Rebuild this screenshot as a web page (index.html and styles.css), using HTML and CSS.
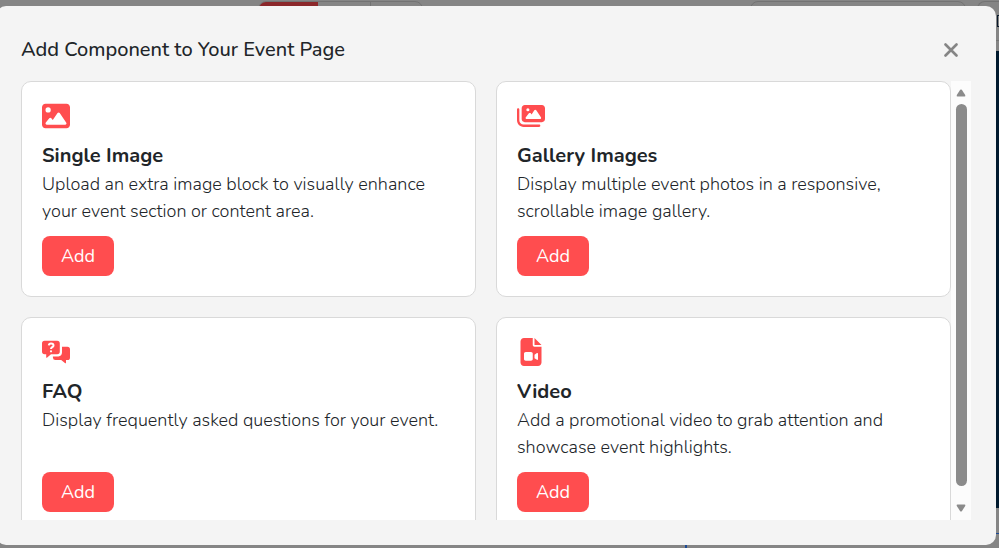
FILE: index.html
```html
<!DOCTYPE html>
<html lang="en">
<head>
<meta charset="utf-8">
<meta name="viewport" content="width=device-width, initial-scale=1">
<title>Add Component to Your Event Page</title>
<link rel="stylesheet" href="styles.css">
</head>
<body>
<div class="page" aria-hidden="true">
  <div class="toolbar">
    <div class="tabs"><span class="tab tab-active"></span><span class="tab"></span><span class="tab"></span></div>
    <div class="field"></div>
    <div class="field field-end"><span class="field-mark"></span></div>
  </div>
  <div class="hero"></div>
  <div class="panel"></div>
  <div class="footer-row"><span class="footer-mark"></span></div>
</div>

<div class="overlay">
  <section class="modal" role="dialog" aria-modal="true" aria-labelledby="modal-title">
    <header class="modal-header">
      <h1 class="modal-title" id="modal-title">Add Component to Your Event Page</h1>
      <button class="close" type="button" aria-label="Close">
        <svg viewBox="0 0 14 14" width="14" height="14"><path d="M1.5 1.5L12.5 12.5M12.5 1.5L1.5 12.5" fill="none" stroke="currentColor" stroke-width="2.6" stroke-linecap="round"/></svg>
      </button>
    </header>
    <div class="modal-body">
      <div class="cards">
        <article class="card">
          <svg class="icon" viewBox="0 0 512 512"><path d="M0 96C0 60.7 28.7 32 64 32H448c35.3 0 64 28.7 64 64V416c0 35.3-28.7 64-64 64H64c-35.3 0-64-28.7-64-64V96zM323.8 202.5c-4.5-6.6-11.9-10.5-19.8-10.5s-15.4 3.9-19.8 10.5l-87 127.6L170.7 297c-4.6-5.7-11.5-9-18.7-9s-14.2 3.3-18.7 9l-64 80c-5.8 7.2-6.9 17.1-2.9 25.4s12.4 13.6 21.6 13.6h96 32H424c8.9 0 17.1-4.9 21.2-12.8s3.6-17.4-1.4-24.7l-120-176zM112 192a48 48 0 1 0 0-96 48 48 0 1 0 0 96z"/></svg>
          <h2 class="card-title">Single Image</h2>
          <p class="card-text">Upload an extra image block to visually enhance your event section or content area.</p>
          <button class="add" type="button">Add</button>
        </article>
        <article class="card">
          <svg class="icon" viewBox="0 0 576 512"><path d="M160 32c-35.3 0-64 28.7-64 64V320c0 35.3 28.7 64 64 64H512c35.3 0 64-28.7 64-64V96c0-35.3-28.7-64-64-64H160zM396 138.7l96 144c4.9 7.4 5.4 16.8 1.2 24.6S480.9 320 472 320H328 280 200c-9.2 0-17.6-5.3-21.6-13.6s-2.9-18.2 2.9-25.4l64-80c4.6-5.7 11.4-9 18.7-9s14.2 3.3 18.7 9l17.3 21.6 56-84C360.5 132 368 128 376 128s15.5 4 20 10.7zM192 128a32 32 0 1 1 64 0 32 32 0 1 1 -64 0zM48 120c0-13.3-10.7-24-24-24S0 106.7 0 120V344c0 75.1 60.9 136 136 136H456c13.3 0 24-10.7 24-24s-10.7-24-24-24H136c-48.6 0-88-39.4-88-88V120z"/></svg>
          <h2 class="card-title">Gallery Images</h2>
          <p class="card-text">Display multiple event photos in a responsive, scrollable image gallery.</p>
          <button class="add" type="button">Add</button>
        </article>
        <article class="card">
          <svg class="icon" viewBox="0 0 28 28"><path d="M2.6 2.8H15.2Q17.8 2.8 17.8 5.4V13.6Q17.8 16.2 15.2 16.2H9L5.2 19.6Q4.2 20.3 4.2 19V16.2H2.6Q0 16.2 0 13.6V5.4Q0 2.8 2.6 2.8Z"/><path d="M20 8.8H25.4Q28 8.8 28 11.4V19.4Q28 22 25.4 22H24V24.4Q24 25.8 22.9 25L19.2 22H13.4Q11 22 10.9 19.4V18.4H16.4Q19.9 18 20 14.6Z"/><path class="icon-line" d="M6.8 7.3C7 5.8 8 5.4 9 5.4C10.5 5.4 11.5 6.2 11.5 7.4C11.5 9.3 9 9.1 9 11"/><circle class="icon-dot" cx="9" cy="13.3" r="1.1"/></svg>
          <h2 class="card-title">FAQ</h2>
          <p class="card-text">Display frequently asked questions for your event.</p>
          <button class="add" type="button">Add</button>
        </article>
        <article class="card">
          <svg class="icon" viewBox="-64 0 512 512"><path d="M64 0C28.7 0 0 28.7 0 64V448c0 35.3 28.7 64 64 64H320c35.3 0 64-28.7 64-64V160H256c-17.7 0-32-14.3-32-32V0H64zM256 0V128H384L256 0zM64 288c0-17.7 14.3-32 32-32h96c17.7 0 32 14.3 32 32v96c0 17.7-14.3 32-32 32H96c-17.7 0-32-14.3-32-32V288zM300.9 397.9L256 368V304l44.9-29.9c2-1.3 4.4-2.1 6.8-2.1c6.8 0 12.3 5.5 12.3 12.3V387.7c0 6.8-5.5 12.3-12.3 12.3c-2.4 0-4.8-.7-6.8-2.1z"/></svg>
          <h2 class="card-title">Video</h2>
          <p class="card-text">Add a promotional video to grab attention and showcase event highlights.</p>
          <button class="add" type="button">Add</button>
        </article>
      </div>
      <div class="scrollbar" aria-hidden="true">
        <svg viewBox="0 0 10 8" width="10" height="8"><path d="M4.2 .8Q5 0 5.8 .8L9.2 6Q9.8 7.5 8.5 7.5H1.5Q.2 7.5 .8 6Z"/></svg>
        <span class="thumb"></span>
        <svg viewBox="0 0 10 8" width="10" height="8"><path d="M4.2 7.2Q5 8 5.8 7.2L9.2 2Q9.8 .5 8.5 .5H1.5Q.2 .5 .8 2Z"/></svg>
      </div>
    </div>
  </section>
</div>
</body>
</html>
```
FILE: styles.css
```css
* { box-sizing: border-box; }

body {
  margin: 0;
  height: 100vh;
  overflow: hidden;
  background: #858585;
  color: #212529;
  font-family: Nunito, "Open Sans", sans-serif;
}

h1, h2, p { margin: 0; }
button { font-family: inherit; border: 0; cursor: pointer; }

/* Dimmed page behind the dialog */
.page {
  height: 100vh;
  display: flex;
  flex-direction: column;
}

.toolbar {
  display: flex;
  height: 51px;
  padding: 1px 0 10px 258px;
}

.tabs {
  display: flex;
  width: 165px;
  margin-right: auto;
  border: 1px solid #737373;
  border-radius: 8px;
  overflow: hidden;
}

.tab { flex: 1; border-left: 1px solid #737373; }
.tab-active { flex: 0 0 59px; background: #8b272a; }
.tab-active + .tab { border-left: 0; }

.field {
  width: 216px;
  border: 1px solid #737373;
  border-radius: 8px;
}

.field-end {
  width: 22px;
  margin-left: 11px;
  padding-top: 13px;
  border-right: 0;
  border-radius: 8px 0 0 8px;
}

.field-mark {
  display: block;
  width: 2px;
  height: 12px;
  margin-left: auto;
  border: solid #0a1a2c;
  border-width: 1px 0 1px 1px;
}

.hero { flex: 1; background: #001a2e; }
.panel { height: 26px; border-bottom: 1px solid #1d4a94; }
.footer-row { height: 14px; padding: 11px 0 0 685px; }
.footer-mark { display: block; width: 2px; height: 3px; background: #1d4a94; }

/* Dialog */
.overlay {
  position: fixed;
  inset: 0;
  display: flex;
  padding: 6px 3px 3px 0;
}

.modal {
  flex: 1;
  min-width: 0;
  display: flex;
  flex-direction: column;
  margin-left: -4px;
  padding: 0 25px 25px;
  background: #f4f4f4;
  border-radius: 10px;
}

.modal-header {
  display: flex;
  align-items: center;
  justify-content: space-between;
  height: 75px;
  padding: 13px 8px 0 0;
}

.modal-title {
  font-size: 20px;
  font-weight: 500;
  line-height: 28px;
}

.close {
  display: flex;
  padding: 5px;
  background: none;
  color: #858585;
}

.modal-body {
  flex: 1;
  min-height: 0;
  display: flex;
}

.cards {
  flex: 1;
  display: grid;
  grid-template-columns: 1fr 1fr;
  grid-auto-rows: max-content;
  gap: 20px;
  overflow-y: auto;
  scrollbar-width: none;
}

.card {
  display: flex;
  flex-direction: column;
  align-items: flex-start;
  padding: 20px;
  background: #fff;
  border: 1px solid #d9d9d9;
  border-radius: 10px;
}

.icon { width: 28px; height: 28px; fill: #ff4d4f; }
.icon-line { fill: none; stroke: #fff; stroke-width: 2; }
.icon-dot { fill: #fff; }

.card-title {
  margin: 13px 0 3px;
  font-size: 20px;
  font-weight: 700;
  line-height: 25px;
}

.card-text {
  flex: 1;
  min-height: 54px;
  margin-bottom: 11px;
  font-size: 18px;
  font-weight: 300;
  line-height: 27px;
}

.add {
  min-width: 72px;
  height: 40px;
  border-radius: 8px;
  background: #ff4d4f;
  color: #fff;
  font-size: 18px;
}

.scrollbar {
  width: 20px;
  display: flex;
  flex-direction: column;
  align-items: center;
  gap: 7px;
  padding: 8px 0;
  background: #fcfcfc;
}

.scrollbar svg { fill: #8b8b8b; }

.thumb {
  flex: 0 1 382px;
  width: 11px;
  margin-bottom: auto;
  border-radius: 6px;
  background: #8b8b8b;
}
```
